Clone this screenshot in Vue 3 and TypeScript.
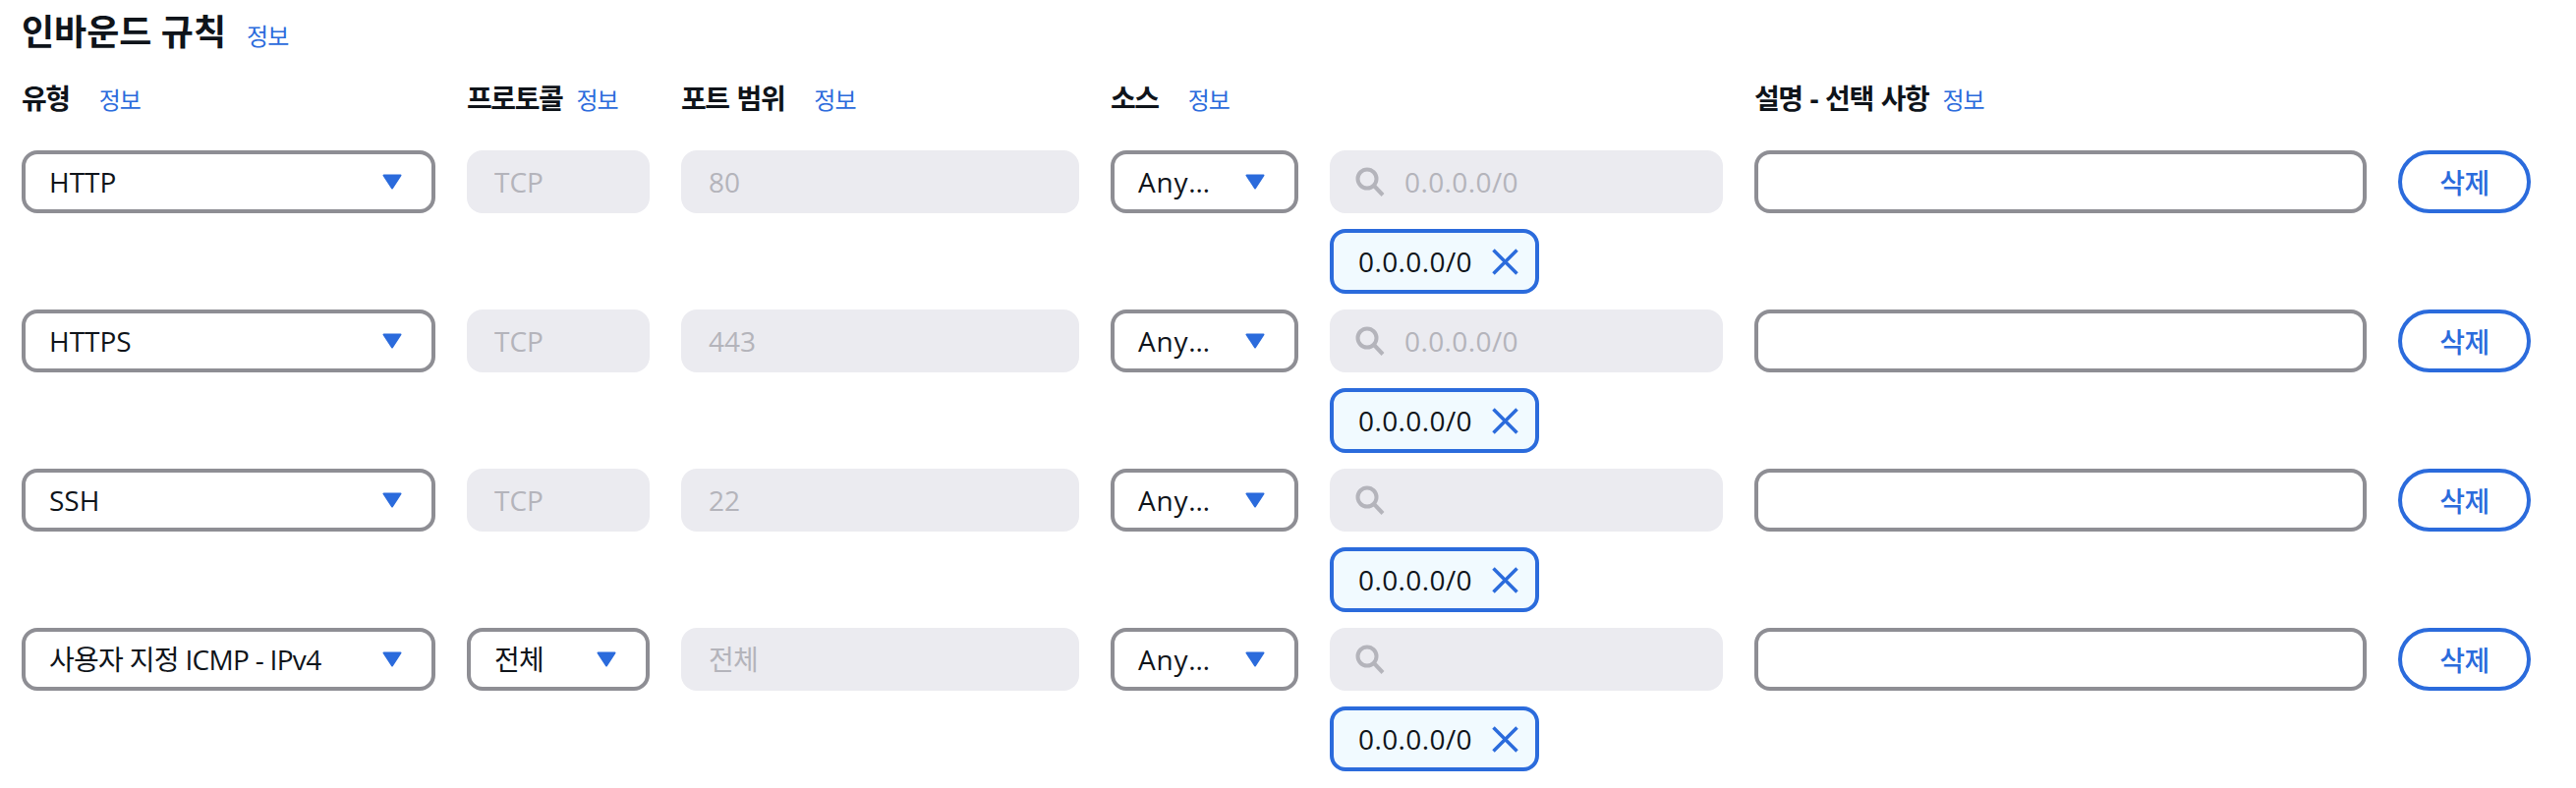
<script setup lang="ts">
interface Rule {
  type: string
  protocol: string
  protocolSelect?: boolean
  port: string
  placeholder: string
  korean?: boolean
}

interface Col {
  label: string
  wide?: boolean
}

const cols: Col[] = [
  { label: '유형', wide: true },
  { label: '프로토콜' },
  { label: '포트 범위', wide: true },
  { label: '소스', wide: true },
  { label: '' },
  { label: '설명 - 선택 사항' },
]

const rules: Rule[] = [
  { type: 'HTTP', protocol: 'TCP', port: '80', placeholder: '0.0.0.0/0' },
  { type: 'HTTPS', protocol: 'TCP', port: '443', placeholder: '0.0.0.0/0' },
  { type: 'SSH', protocol: 'TCP', port: '22', placeholder: '' },
  { type: '사용자 지정 ICMP - IPv4', protocol: '전체', protocolSelect: true, port: '전체', placeholder: '', korean: true },
]
</script>

<template>
  <div class="page">
    <div class="title-row">
      <h2 class="title">인바운드 규칙</h2>
      <a class="info">정보</a>
    </div>

    <div class="cols head">
      <div v-for="col in cols" :key="col.label" class="head-cell" :class="{ wide: col.wide }">
        <template v-if="col.label">
          <span class="label">{{ col.label }}</span>
          <a class="info">정보</a>
        </template>
      </div>
    </div>

    <div v-for="rule in rules" :key="rule.type" class="cols row">
      <div class="field select">
        <span class="value" :class="{ korean: rule.korean }">{{ rule.type }}</span>
        <svg class="caret" width="20" height="16" viewBox="0 0 20 16"><path d="M1.5 1.5h17L10 14.5z" fill="#2b6bdc" stroke="#2b6bdc" stroke-width="2" stroke-linejoin="round" /></svg>
      </div>

      <div v-if="rule.protocolSelect" class="field select">
        <span class="value" :class="{ korean: rule.korean }">{{ rule.protocol }}</span>
        <svg class="caret" width="20" height="16" viewBox="0 0 20 16"><path d="M1.5 1.5h17L10 14.5z" fill="#2b6bdc" stroke="#2b6bdc" stroke-width="2" stroke-linejoin="round" /></svg>
      </div>
      <div v-else class="field disabled">{{ rule.protocol }}</div>

      <div class="field disabled" :class="{ korean: rule.korean }">{{ rule.port }}</div>

      <div class="field select">
        <span class="value any">Any…</span>
        <svg class="caret" width="20" height="16" viewBox="0 0 20 16"><path d="M1.5 1.5h17L10 14.5z" fill="#2b6bdc" stroke="#2b6bdc" stroke-width="2" stroke-linejoin="round" /></svg>
      </div>

      <div class="source">
        <div class="field disabled search">
          <svg width="30" height="30" viewBox="0 0 30 30" fill="none" stroke="#b4b4bb" stroke-width="4"><circle cx="12" cy="12" r="9.5" /><path d="M19 19l9 9.5" /></svg>
          <span class="cidr">{{ rule.placeholder }}</span>
        </div>
        <div class="tag">
          <span class="cidr">0.0.0.0/0</span>
          <svg width="27" height="27" viewBox="0 0 27 27" fill="none" stroke="#2b6bdc" stroke-width="3.5"><path d="M1.5 1.5l24 24M25.5 1.5l-24 24" /></svg>
        </div>
      </div>

      <input class="field desc" type="text" />

      <button class="remove">삭제</button>
    </div>
  </div>
</template>

<style scoped>
.page {
  box-sizing: border-box;
  padding: 9px 46px 0 22px;
  color: #0f141a;
  font-family: "Open Sans", "Noto Sans CJK KR", sans-serif;
  font-size: 28px;
  line-height: 48px;
}

.title-row {
  display: flex;
  align-items: baseline;
  gap: 21px;
  height: 51px;
}

.title {
  margin: 0;
  font-size: 36px;
  font-weight: 700;
}

.info {
  color: #2b6bdc;
  font-size: 24px;
  letter-spacing: -1px;
}

.cols {
  display: grid;
  grid-template-columns: 421px 186px 405px 191px 400px 623px 135px;
  column-gap: 32px;
}

.head {
  margin-top: 16px;
  height: 77px;
}

.head-cell {
  display: flex;
  align-items: baseline;
  gap: 14px;
}

.head-cell.wide {
  gap: 30px;
}

.label {
  font-weight: 700;
  letter-spacing: -1.4px;
  word-spacing: 2px;
}

.row {
  margin-bottom: 16px;
  align-items: start;
}

.field {
  box-sizing: border-box;
  height: 64px;
  border-radius: 16px;
  display: flex;
  align-items: center;
  font-size: 28px;
}

.select {
  border: 4px solid #8e8e94;
  padding: 0 30px 0 24px;
  justify-content: space-between;
  background: #fff;
}

.value {
  white-space: nowrap;
}

.korean {
  letter-spacing: -0.7px;
}

.any {
  letter-spacing: 0.8px;
}

.caret {
  flex: none;
}

.disabled {
  background: #ebebf0;
  color: #b4b4bb;
  padding: 0 28px;
}

.source {
  display: flex;
  flex-direction: column;
  align-items: flex-start;
  gap: 16px;
}

.search {
  width: 100%;
  gap: 20px;
  padding: 0 26px;
}

.cidr {
  letter-spacing: 0.4px;
}

.tag {
  box-sizing: border-box;
  height: 66px;
  display: flex;
  align-items: center;
  gap: 20px;
  padding: 0 17px 0 25px;
  border: 4px solid #2b6bdc;
  border-radius: 16px;
  background: #f1faff;
}

.desc {
  width: 100%;
  border: 4px solid #8e8e94;
  background: #fff;
  outline: none;
  padding: 0 24px;
}

.remove {
  box-sizing: border-box;
  height: 64px;
  border: 4px solid #2b6bdc;
  border-radius: 32px;
  background: #fff;
  color: #2b6bdc;
  font-family: inherit;
  font-size: 28px;
  font-weight: 500;
  letter-spacing: -0.6px;
  padding: 0;
}
</style>

<style>
html, body {
  background: #fff;
}
</style>
